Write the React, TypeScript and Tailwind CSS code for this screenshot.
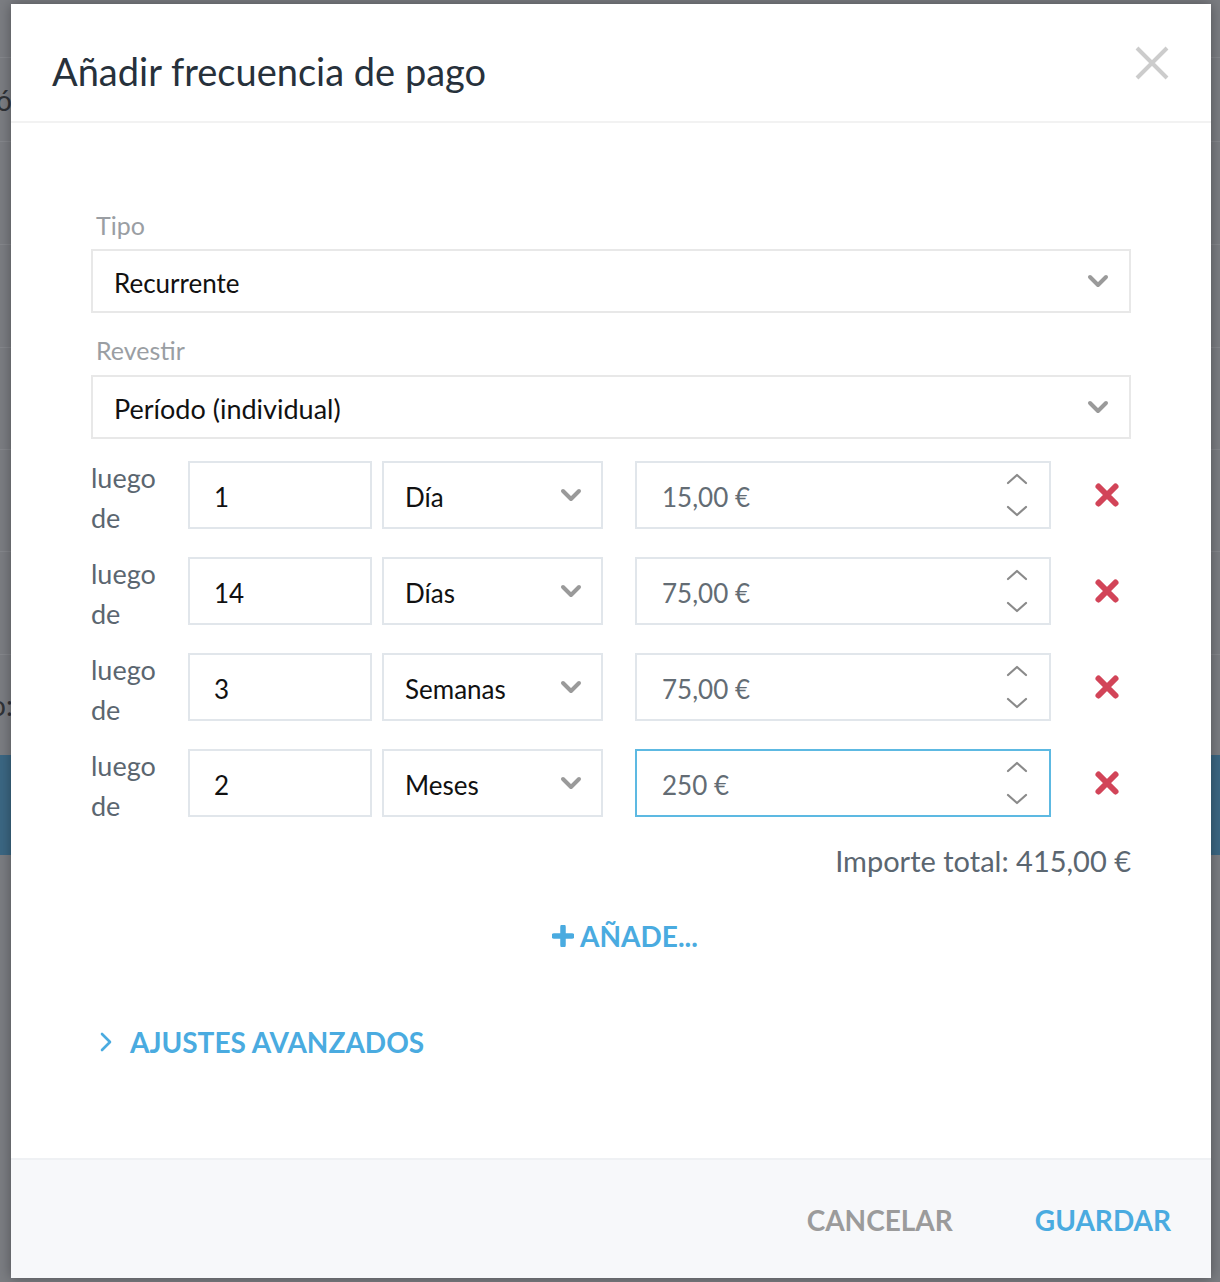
import React from "react";

function SelectChevron() {
  return (
    <svg width="22" height="14" viewBox="0 0 22 14" fill="none">
      <path d="M3 3 L11 11 L19 3" stroke="#9a9a9a" strokeWidth="4" strokeLinecap="round" strokeLinejoin="round" />
    </svg>
  );
}

function SpinUp() {
  return (
    <svg width="22" height="12" viewBox="0 0 22 12" fill="none">
      <path d="M2 10 L11 2 L20 10" stroke="#8a8a8a" strokeWidth="2.2" strokeLinecap="round" strokeLinejoin="round" />
    </svg>
  );
}

function SpinDown() {
  return (
    <svg width="22" height="12" viewBox="0 0 22 12" fill="none">
      <path d="M2 2 L11 10 L20 2" stroke="#8a8a8a" strokeWidth="2.2" strokeLinecap="round" strokeLinejoin="round" />
    </svg>
  );
}

function RedX() {
  return (
    <svg width="26" height="26" viewBox="0 0 26 26" fill="none">
      <path d="M4.5 4.5 L21.5 21.5 M21.5 4.5 L4.5 21.5" stroke="#d24458" strokeWidth="6" strokeLinecap="round" />
    </svg>
  );
}

function Row({ n, unit, amount, focused }: { n: string; unit: string; amount: string; focused?: boolean }) {
  return (
    <div className="flex h-[68px]">
      <div className="w-[97px] self-start -mt-[3px] text-[27px] leading-[40px] text-[#5b6670]">
        luego
        <br />
        de
      </div>
      <div className="w-[184px] border-2 border-[#e1e6eb] flex items-center pt-[4px] pl-[24px] text-[26px] text-[#111]">
        {n}
      </div>
      <div className="ml-[10px] w-[221px] border-2 border-[#e1e6eb] flex items-center justify-between pl-[21px] pr-[19px] text-[26px] text-[#111]">
        <span className="pt-[4px]">{unit}</span>
        <SelectChevron />
      </div>
      <div
        className={
          focused
            ? "ml-[32px] w-[416px] border-2 border-[#5db9e2] flex items-center justify-between pl-[25px] pr-[21px] text-[26px] text-[#636c74]"
            : "ml-[32px] w-[416px] border-2 border-[#e1e6eb] flex items-center justify-between pl-[25px] pr-[21px] text-[26px] text-[#636c74]"
        }
      >
        <span className="pt-[4px]">{amount}</span>
        <div className="flex flex-col gap-[20px]">
          <SpinUp />
          <SpinDown />
        </div>
      </div>
      <div className="ml-[43px] flex items-center">
        <RedX />
      </div>
    </div>
  );
}

export default function App() {
  return (
    <div className="relative w-[1220px] h-[1282px] overflow-hidden bg-[#7b7d82] font-['Lato',sans-serif]">
      {/* background page */}
      <div className="flex flex-col w-[1220px]">
        <div className="h-[58px] border-b border-[#85878c]" />
        <div className="h-[84px] border-b border-[#85878c] flex items-center text-[28px] text-[#2f3236] -ml-[4px]">ó</div>
        <div className="h-[103px] border-b border-[#85878c]" />
        <div className="h-[103px] border-b border-[#85878c]" />
        <div className="h-[102px] border-b border-[#85878c]" />
        <div className="h-[102px] border-b border-[#85878c]" />
        <div className="h-[103px] border-b border-[#85878c]" />
        <div className="h-[100px] flex items-center text-[28px] text-[#2f3236] -ml-[10px]">o:</div>
        <div className="h-[100px] bg-[#3b6783]" />
      </div>

      {/* modal */}
      <div className="absolute left-[11px] top-[4px] w-[1200px] h-[1274px] bg-white flex flex-col shadow-[0_0_12px_rgba(0,0,0,0.35)]">
        <div className="h-[119px] shrink-0 border-b-2 border-[#f2f2f2] flex items-center justify-between pl-[41px] pr-[42px]">
          <h1 className="text-[38px] text-[#27313b] mt-[18px]">Añadir frecuencia de pago</h1>
          <svg width="34" height="34" viewBox="0 0 34 34" fill="none">
            <path d="M2 2 L32 32 M32 2 L2 32" stroke="#cccccc" strokeWidth="4" />
          </svg>
        </div>

        <div className="flex-1 px-[80px] pt-[86px] flex flex-col">
          <div className="pl-[5px] pt-[1px] text-[25px] leading-[30px] text-[#9a9ea3]">Tipo</div>
          <div className="mt-[9px] h-[64px] border-2 border-[#e8e8e8] flex items-center justify-between pl-[21px] pr-[20px] text-[26px] text-[#111]">
            <span className="pt-[4px]">Recurrente</span>
            <SelectChevron />
          </div>
          <div className="mt-[20px] pl-[5px] pt-[2px] text-[25px] leading-[30px] text-[#9a9ea3]">Revestir</div>
          <div className="mt-[10px] h-[64px] border-2 border-[#e8e8e8] flex items-center justify-between pl-[21px] pr-[20px] text-[26px] text-[#111]">
            <span className="pt-[4px] text-[27px]">Período (individual)</span>
            <SelectChevron />
          </div>

          <div className="mt-[22px] flex flex-col gap-[28px]">
            <Row n="1" unit="Día" amount="15,00 €" />
            <Row n="14" unit="Días" amount="75,00 €" />
            <Row n="3" unit="Semanas" amount="75,00 €" />
            <Row n="2" unit="Meses" amount="250 €" focused />
          </div>

          <div className="mt-[26px] text-right text-[29px] leading-[36px] text-[#5b6670]">Importe total: 415,00 €</div>

          <div className="mt-[39px] pl-[28px] flex justify-center items-center gap-[6px] text-[28px] leading-[36px] font-bold text-[#4aabe0]">
            <svg width="22" height="22" viewBox="0 0 22 22">
              <path d="M11 2 V20 M2 11 H20" stroke="#4aabe0" strokeWidth="5.5" strokeLinecap="round" />
            </svg>
            <span>AÑADE...</span>
          </div>

          <div className="mt-[70px] flex items-center gap-[17px] pl-[9px] text-[28px] leading-[36px] font-bold text-[#4aabe0]">
            <svg width="13" height="20" viewBox="0 0 13 20" fill="none">
              <path d="M2 2 L10 10 L2 18" stroke="#4aabe0" strokeWidth="2.6" strokeLinecap="round" strokeLinejoin="round" />
            </svg>
            <span>AJUSTES AVANZADOS</span>
          </div>
        </div>

        <div className="h-[120px] shrink-0 bg-[#f7f8fa] border-t-2 border-[#eff1f4] flex items-center justify-end gap-[82px] pr-[40px] pt-[2px] text-[28px] font-bold">
          <span className="text-[#9b9b9b]">CANCELAR</span>
          <span className="text-[#4aabe0]">GUARDAR</span>
        </div>
      </div>
    </div>
  );
}
